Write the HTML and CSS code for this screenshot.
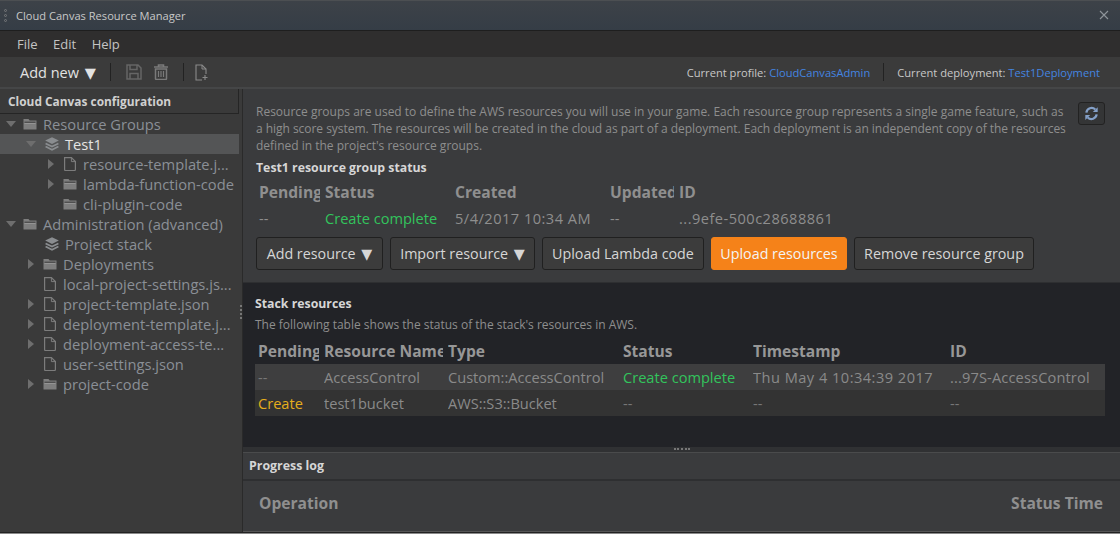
FILE: index.html
```html
<!DOCTYPE html>
<html lang="en">
<head>
    <meta charset="UTF-8">
    <title>Cloud Canvas Resource Manager</title>
    <link rel="stylesheet" href="styles.css">
</head>
<body>
<svg class="defs" width="0" height="0">
    <symbol id="i-folder" viewBox="0 0 14 14">
        <path d="M.5 12.5V2h5l1.2 1.5h6.8v9z" fill="#7e7e7e"/>
        <path d="M1.5 5.2h11" stroke="#3b3b3b" stroke-width="1"/>
        <path d="M1.5 6.5h11" stroke="#949494" stroke-width="1"/>
    </symbol>
    <symbol id="i-file" viewBox="0 0 14 14">
        <path d="M1.6 .6h6.8l4 4v8q0 .9-.9 .9H2.5q-.9 0-.9-.9z" fill="none" stroke="#7c7c7c" stroke-width="1.2"/>
        <path d="M8.4 .6v4h4" fill="none" stroke="#7c7c7c" stroke-width="1"/>
    </symbol>
    <symbol id="i-stack" viewBox="0 0 14 14">
        <path d="M7 0.2l6.8 3.3L7 6.9 .2 3.5z" fill="#8a8d90"/>
        <path d="M.6 6.4L7 9.6l6.4-3.2M.6 9.4L7 12.8l6.4-3.4" fill="none" stroke="#8a8d90" stroke-width="1.7"/>
    </symbol>
</svg>

<div class="titlebar">
    <span class="grip"><i></i><i></i><i></i></span>
    <span class="title">Cloud Canvas Resource Manager</span>
    <svg class="close" width="10" height="10" viewBox="0 0 10 10"><path d="M1 1l8 8M9 1l-8 8" stroke="#8f959b" stroke-width="1.1"/></svg>
</div>

<div class="menubar">
    <span>File</span><span>Edit</span><span>Help</span>
</div>

<div class="toolbar">
    <span class="add-new">Add new <b class="arrow">▼</b></span>
    <span class="sep"></span>
    <svg class="tool" width="16" height="16" viewBox="0 0 16 16"><path d="M1 1h11l3 3v11H1z M4 1.5v4h7v-4 M4 15v-5.5h8V15" fill="none" stroke="#666" stroke-width="1.5"/></svg>
    <svg class="tool" width="16" height="16" viewBox="0 0 16 16"><path d="M1 3h14M5.5 3V1h5v2" fill="none" stroke="#7a7a7a" stroke-width="1.6"/><path d="M2.5 5h11v9.5q0 1-1 1h-9q-1 0-1-1z" fill="none" stroke="#7a7a7a" stroke-width="1.5"/><path d="M5.5 7v6M8 7v6M10.5 7v6" stroke="#7a7a7a" stroke-width="1.2"/></svg>
    <span class="sep sep-b"></span>
    <svg class="tool" width="13" height="17" viewBox="0 0 13 17"><path d="M7 16H1V1h6l4 4v5" fill="none" stroke="#8a8a8a" stroke-width="1.1"/><path d="M7 1v4h4" fill="none" stroke="#8a8a8a"/><path d="M10 11v5M7.5 13.5h5" stroke="#8a8a8a" stroke-width="1.1"/></svg>
    <span class="current">
        <span>Current profile: <a>CloudCanvasAdmin</a></span>
        <span class="sep"></span>
        <span>Current deployment: <a>Test1Deployment</a></span>
    </span>
</div>

<div class="workspace">
    <aside class="sidebar">
        <div class="side-head">Cloud Canvas configuration</div>
        <ul class="tree">
            <li class="d0"><b class="tw open"></b><svg><use href="#i-folder"/></svg>Resource Groups</li>
            <li class="d1 st selected"><b class="tw open"></b><svg><use href="#i-stack"/></svg>Test1</li>
            <li class="d2"><b class="tw closed"></b><svg><use href="#i-file"/></svg>resource-template.j...</li>
            <li class="d2"><b class="tw closed"></b><svg><use href="#i-folder"/></svg>lambda-function-code</li>
            <li class="d2"><b class="tw"></b><svg><use href="#i-folder"/></svg>cli-plugin-code</li>
            <li class="d0"><b class="tw open"></b><svg><use href="#i-folder"/></svg>Administration (advanced)</li>
            <li class="d1 st"><b class="tw"></b><svg><use href="#i-stack"/></svg>Project stack</li>
            <li class="d1"><b class="tw closed"></b><svg><use href="#i-folder"/></svg>Deployments</li>
            <li class="d1"><b class="tw"></b><svg><use href="#i-file"/></svg>local-project-settings.js...</li>
            <li class="d1"><b class="tw closed"></b><svg><use href="#i-file"/></svg>project-template.json</li>
            <li class="d1"><b class="tw closed"></b><svg><use href="#i-file"/></svg>deployment-template.j...</li>
            <li class="d1"><b class="tw closed"></b><svg><use href="#i-file"/></svg>deployment-access-te...</li>
            <li class="d1"><b class="tw"></b><svg><use href="#i-file"/></svg>user-settings.json</li>
            <li class="d1"><b class="tw closed"></b><svg><use href="#i-folder"/></svg>project-code</li>
        </ul>
        <span class="vgrip"></span>
    </aside>

    <main class="content">
        <section class="group">
            <div class="intro">
                <p>Resource groups are used to define the AWS resources you will use in your game. Each resource group represents a single game feature, such as<br><span class="tight">a high score system. The resources will be created in the cloud as part of a deployment. Each deployment is an independent copy of the resources</span><br>defined in the project's resource groups.</p>
                <button class="refresh">
                    <svg width="15" height="15" viewBox="0 0 16 16"><path d="M2.5 7A5.6 5.6 0 0 1 12 3.8M13.5 9A5.6 5.6 0 0 1 4 12.2" fill="none" stroke="#84a0c8" stroke-width="2.4"/><path d="M14.6 1.2v5.2H9.4zM1.4 14.8V9.6h5.2z" fill="#84a0c8"/></svg>
                </button>
            </div>
            <h3>Test1 resource group status</h3>
            <div class="status-table">
                <span class="th">Pending</span><span class="th">Status</span><span class="th">Created</span><span class="th">Updated</span><span class="th">ID</span>
                <span>--</span><span class="green">Create complete</span><span class="num">5/4/2017 10:34 AM</span><span>--</span><span class="num">...9efe-500c28688861</span>
            </div>
            <div class="actions">
                <button class="b-add">Add resource <b class="arrow">▼</b></button>
                <button class="b-import">Import resource <b class="arrow">▼</b></button>
                <button class="b-lambda">Upload Lambda code</button>
                <button class="b-upload primary">Upload resources</button>
                <button class="b-remove">Remove resource group</button>
            </div>
        </section>

        <section class="stack">
            <h3>Stack resources</h3>
            <p>The following table shows the status of the stack's resources in AWS.</p>
            <div class="stack-table">
                <div class="row head">
                    <span>Pending</span><span>Resource Name</span><span>Type</span><span>Status</span><span>Timestamp</span><span>ID</span>
                </div>
                <div class="row odd">
                    <span class="dim">--</span><span>AccessControl</span><span>Custom::AccessControl</span><span class="green">Create complete</span><span class="num">Thu May 4 10:34:39 2017</span><span class="wide">...97S-AccessControl</span>
                </div>
                <div class="row even">
                    <span class="yellow">Create</span><span>test1bucket</span><span>AWS::S3::Bucket</span><span class="dim">--</span><span class="dim">--</span><span class="dim">--</span>
                </div>
            </div>
        </section>

        <div class="splitter"><span class="hgrip"></span></div>

        <section class="log">
            <div class="log-head">Progress log</div>
            <div class="log-cols"><span>Operation</span><span>Status Time</span></div>
        </section>
    </main>
</div>
</body>
</html>
```

FILE: styles.css
```css
* {
    box-sizing: border-box;
}
html, body {
    margin: 0;
    height: 534px;
    overflow: hidden;
}
body {
    background: #3a3b3d;
    color: #9a9a9a;
    font-family: "Open Sans", sans-serif;
    font-size: 14px;
    display: flex;
    flex-direction: column;
    border-bottom: 1px solid #8a8a8a;
}
.defs {
    position: absolute;
}
.titlebar {
    height: 31px;
    flex: none;
    display: flex;
    align-items: center;
    padding: 0 11px 1px 4px;
    background: linear-gradient(#3d4248, #353d46);
    border-top: 1px solid #4c4f52;
    border-bottom: 1px solid #1e1e1e;
    color: #c8c8c8;
    font-size: 11.1px;
}
.grip {
    display: flex;
    flex-direction: column;
    gap: 2px;
    margin-right: 9px;
}
.grip i {
    width: 3px;
    height: 3px;
    border-radius: 50%;
    border: 1px solid #77797b;
}
.close {
    margin-left: auto;
}
.menubar {
    height: 26px;
    flex: none;
    display: flex;
    align-items: center;
    gap: 15.5px;
    padding: 0 17px 1px;
    background: #2f2e2e;
    color: #c4c4c4;
    font-size: 13px;
}
.toolbar {
    height: 32px;
    flex: none;
    display: flex;
    align-items: center;
    padding: 0 20px;
    background: #3b3b3b;
    border-bottom: 2px solid #454647;
    color: #c8c8c8;
    font-size: 11.15px;
}
.add-new {
    font-size: 14.5px;
    color: #e2e2e2;
}
.arrow {
    font-family: "DejaVu Sans", sans-serif;
    font-weight: normal;
    font-size: 1em;
    margin-left: 2px;
}
.sep {
    width: 1px;
    height: 18px;
    background: #222;
    display: inline-block;
}
.toolbar > .sep {
    margin: 0 15px 0 14px;
}
.toolbar > .sep-b {
    margin: 0 11px 0 14px;
}
.tool + .tool {
    margin-left: 11px;
}
.current {
    margin-left: auto;
    display: flex;
    align-items: center;
    gap: 13px;
}
.current a {
    color: #4485e0;
}
.workspace {
    flex: 1;
    display: flex;
    min-height: 0;
    border-bottom: 1px solid #222;
}
.sidebar {
    width: 243px;
    flex: none;
    position: relative;
    background: #3a3a3a;
    border-right: 1px solid #2a2a2a;
}
.side-head {
    width: 239px;
    height: 25px;
    padding: 0 8px;
    display: flex;
    align-items: center;
    border-right: 1px solid #252525;
    border-bottom: 1px solid #252525;
    color: #d0d0d0;
    font-size: 11.9px;
    font-weight: 700;
}
.tree {
    list-style: none;
    margin: 0;
    padding: 0;
    width: 239px;
    font-size: 14.7px;
    color: #8a8f96;
}
.tree li {
    height: 20px;
    display: flex;
    align-items: center;
    white-space: nowrap;
}
.tree svg {
    width: 14px;
    height: 14px;
    flex: none;
    margin-right: 6px;
}
.d0 {
    padding-left: 6px;
}
.d1 {
    padding-left: 26px;
}
.d2 {
    padding-left: 46px;
}
.tw {
    width: 17px;
    height: 10px;
    flex: none;
    position: relative;
}
.st .tw {
    width: 19px;
}
.tw.open::after {
    content: "";
    position: absolute;
    left: 0;
    top: 2px;
    border-left: 5px solid transparent;
    border-right: 5px solid transparent;
    border-top: 6px solid #6e6e6e;
}
.tw.closed::after {
    content: "";
    position: absolute;
    left: 2px;
    top: 0;
    border-top: 5px solid transparent;
    border-bottom: 5px solid transparent;
    border-left: 6px solid #6e6e6e;
}
.tree .selected {
    background: #545556;
    color: #e4e4e4;
}
.vgrip {
    position: absolute;
    right: 0;
    top: 216px;
    width: 2px;
    height: 14px;
    border-left: 2px dotted #777;
}
.content {
    flex: 1;
    display: flex;
    flex-direction: column;
    min-width: 0;
}
.group {
    height: 194px;
    flex: none;
    padding: 12px 0 0 13px;
    background: #3a3b3d;
    border-bottom: 1px solid #2e2f31;
}
.intro {
    display: flex;
    justify-content: space-between;
    padding-right: 15px;
}
.intro p {
    margin: 2px 0 0;
    font-size: 12px;
    line-height: 17px;
    color: #8e8e8e;
    white-space: nowrap;
}
.tight {
    letter-spacing: -0.035px;
}
.refresh {
    width: 27px;
    height: 23px;
    margin-top: 1px;
    padding: 0;
    display: flex;
    align-items: center;
    justify-content: center;
    background: #343536;
    border: 1px solid #222;
    border-radius: 3px;
}
h3 {
    margin: 0;
    color: #d6d6d6;
    font-size: 12.3px;
    font-weight: 700;
}
.group h3 {
    margin-top: 5px;
    line-height: 18px;
}
.status-table {
    display: grid;
    grid-template-columns: 61px 125px 150px 64px 1fr;
    grid-template-rows: 26px 26px;
    column-gap: 5px;
    align-items: center;
    margin: 2px 0 6px 3px;
    font-size: 14.6px;
    color: #8e8e8e;
}
.th {
    font-size: 15.6px;
    font-weight: 700;
    color: #8f8f8f;
    white-space: nowrap;
    overflow: hidden;
}
.num {
    letter-spacing: 0.48px;
}
.green {
    color: #32c45c;
}
.yellow {
    color: #e5ae1c;
}
.actions {
    display: flex;
    gap: 7px;
}
button {
    font-family: inherit;
}
.actions button {
    height: 33px;
    padding: 0;
    background: #3c3c3c;
    border: 1px solid #202020;
    border-radius: 3px;
    color: #d6d6d6;
    font-size: 14.3px;
    white-space: nowrap;
}
.actions .b-add {
    width: 127px;
}
.actions .b-import {
    width: 145px;
}
.actions .b-lambda {
    width: 162px;
}
.actions .b-upload {
    width: 136px;
}
.actions .b-remove {
    width: 180px;
}
.actions .primary {
    background: #f58219;
    border-color: #f58219;
    color: #f4f4f4;
}
.stack {
    height: 164px;
    flex: none;
    padding: 12px 15px 0 12px;
    background: #222327;
}
.stack h3 {
    line-height: 17px;
}
.stack p {
    margin: 4px 0 0;
    font-size: 12px;
    line-height: 17px;
    color: #8e8e8e;
}
.stack-table {
    margin-top: 4px;
    font-size: 14.6px;
    color: #8a8a8a;
}
.row {
    display: grid;
    grid-template-columns: 61px 119px 170px 125px 192px 1fr;
    column-gap: 5px;
    align-items: center;
    height: 26px;
    padding-left: 3px;
}
.row span {
    white-space: nowrap;
    overflow: hidden;
}
.row .wide {
    letter-spacing: 0.15px;
}
.row .dim {
    color: #777;
}
.row .yellow {
    color: #e5ae1c;
}
.row .green {
    color: #32c45c;
}
.head {
    font-size: 15.6px;
    font-weight: 700;
    color: #979797;
    height: 27px;
}
.odd {
    background: #3e3e3f;
}
.even {
    background: #333333;
}
.splitter {
    height: 5px;
    flex: none;
    display: flex;
    justify-content: center;
    background: #303133;
}
.hgrip {
    width: 16px;
    height: 2px;
    margin-top: 1px;
    border-top: 2px dotted #777;
}
.log {
    flex: 1;
    display: flex;
    flex-direction: column;
    border-top: 1px solid #4a4b4c;
    border-bottom: 1px solid #555;
}
.log-head {
    height: 28px;
    flex: none;
    display: flex;
    align-items: center;
    padding: 0 0 2px 6px;
    border-bottom: 2px solid #2e2f31;
    color: #d6d6d6;
    font-size: 12.4px;
    font-weight: 700;
}
.log-cols {
    flex: 1;
    display: flex;
    justify-content: space-between;
    align-items: center;
    padding: 0 17px 6px 16px;
    font-size: 15.6px;
    font-weight: 700;
    color: #8f8f8f;
}
```
